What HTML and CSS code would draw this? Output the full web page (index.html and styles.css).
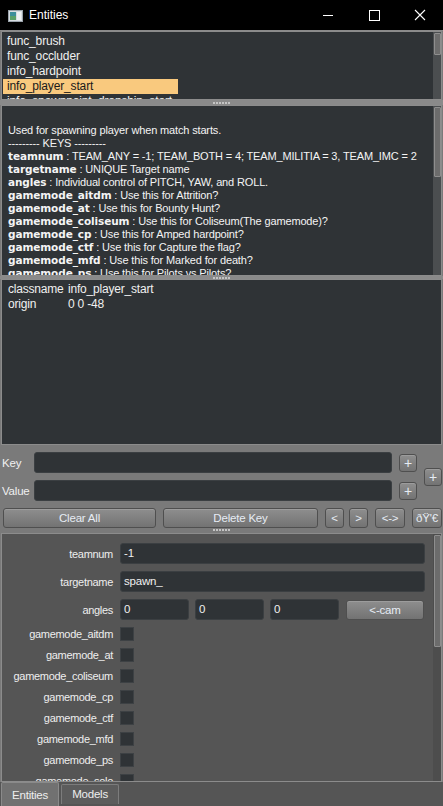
FILE: index.html
```html
<!DOCTYPE html>
<html lang="en">
<head>
    <meta charset="UTF-8">
    <meta name="viewport" content="width=device-width, initial-scale=1.0">
    <title>Entities</title>
    <link rel="stylesheet" href="styles.css">
</head>
<body>
    <!-- Window title bar -->
    <div class="titlebar">
        <svg class="app-icon" width="15" height="12" viewBox="0 0 15 12">
            <rect x="0.5" y="0.5" width="14" height="11" fill="#d8dde2" stroke="#9aa3ab"/>
            <rect x="2" y="2" width="6" height="8" fill="#3d8f9c"/>
            <rect x="2" y="6" width="6" height="4" fill="#5aa06a"/>
            <rect x="9" y="2" width="4" height="8" fill="#eef1f4"/>
        </svg>
        <span class="title-text">Entities</span>
        <div class="win-controls">
            <div class="win-btn"><span class="ico-min"></span></div>
            <div class="win-btn"><span class="ico-max"></span></div>
            <div class="win-btn">
                <svg width="12" height="12" viewBox="0 0 12 12">
                    <path d="M1 1 L11 11 M11 1 L1 11" stroke="#fff" stroke-width="1.1"/>
                </svg>
            </div>
        </div>
    </div>

    <!-- Entity class list -->
    <div class="panel list-panel">
        <div class="panel-body">
            <div class="list-item">func_brush</div>
            <div class="list-item">func_occluder</div>
            <div class="list-item">info_hardpoint</div>
            <div class="list-item list-item-selected">info_player_start</div>
            <div class="list-item">info_spawnpoint_dropship_start</div>
        </div>
        <div class="scrollbar"><div class="thumb thumb-list"></div></div>
    </div>

    <div class="splitter"><span class="grip"></span></div>

    <!-- Description -->
    <div class="panel desc-panel">
        <div class="panel-body desc">
            <div class="line">&nbsp;</div>
            <div class="line">Used for spawning player when match starts.</div>
            <div class="line">--------- KEYS ---------</div>
            <div class="line"><b>teamnum</b> : TEAM_ANY = -1; TEAM_BOTH = 4; TEAM_MILITIA = 3, TEAM_IMC = 2</div>
            <div class="line"><b>targetname</b> : UNIQUE Target name</div>
            <div class="line"><b>angles</b> : Individual control of PITCH, YAW, and ROLL.</div>
            <div class="line"><b>gamemode_aitdm</b> : Use this for Attrition?</div>
            <div class="line"><b>gamemode_at</b> : Use this for Bounty Hunt?</div>
            <div class="line"><b>gamemode_coliseum</b> : Use this for Coliseum(The gamemode)?</div>
            <div class="line"><b>gamemode_cp</b> : Use this for Amped hardpoint?</div>
            <div class="line"><b>gamemode_ctf</b> : Use this for Capture the flag?</div>
            <div class="line"><b>gamemode_mfd</b> : Use this for Marked for death?</div>
            <div class="line"><b>gamemode_ps</b> : Use this for Pilots vs Pilots?</div>
        </div>
        <div class="scrollbar"><div class="thumb thumb-desc"></div></div>
    </div>

    <div class="splitter splitter-thin"><span class="grip"></span></div>

    <!-- Raw key/values -->
    <div class="panel props-panel">
        <div class="panel-body props">
            <div class="prop-row"><span class="prop-key">classname</span><span>info_player_start</span></div>
            <div class="prop-row"><span class="prop-key">origin</span><span>0 0 -48</span></div>
        </div>
    </div>

    <!-- Key / value editor -->
    <div class="kv">
        <div class="kv-fields">
            <div class="kv-row">
                <span class="kv-label">Key</span>
                <div class="field kv-input"></div>
                <button class="btn btn-plus">+</button>
            </div>
            <div class="kv-row">
                <span class="kv-label">Value</span>
                <div class="field kv-input"></div>
                <button class="btn btn-plus">+</button>
            </div>
        </div>
        <button class="btn btn-plus">+</button>
    </div>

    <div class="actions">
        <button class="btn btn-clear">Clear All</button>
        <button class="btn btn-delete">Delete Key</button>
        <button class="btn btn-nav">&lt;</button>
        <button class="btn btn-nav btn-next">&gt;</button>
        <button class="btn btn-swap">&lt;-&gt;</button>
        <button class="btn btn-odd">ðŸ'€</button>
    </div>

    <div class="splitter splitter-low"><span class="grip"></span></div>

    <!-- Typed entity form -->
    <div class="panel form-panel">
        <div class="panel-body form">
            <div class="form-row">
                <span class="form-label">teamnum</span>
                <div class="field field-wide">-1</div>
            </div>
            <div class="form-row">
                <span class="form-label">targetname</span>
                <div class="field field-wide">spawn_</div>
            </div>
            <div class="form-row angles-row">
                <span class="form-label">angles</span>
                <div class="field field-angle">0</div>
                <div class="field field-angle">0</div>
                <div class="field field-angle">0</div>
                <button class="btn btn-cam">&lt;-cam</button>
            </div>
            <div class="check-row"><span class="form-label">gamemode_aitdm</span><span class="checkbox"></span></div>
            <div class="check-row"><span class="form-label">gamemode_at</span><span class="checkbox"></span></div>
            <div class="check-row"><span class="form-label">gamemode_coliseum</span><span class="checkbox"></span></div>
            <div class="check-row"><span class="form-label">gamemode_cp</span><span class="checkbox"></span></div>
            <div class="check-row"><span class="form-label">gamemode_ctf</span><span class="checkbox"></span></div>
            <div class="check-row"><span class="form-label">gamemode_mfd</span><span class="checkbox"></span></div>
            <div class="check-row"><span class="form-label">gamemode_ps</span><span class="checkbox"></span></div>
            <div class="check-row"><span class="form-label">gamemode_solo</span><span class="checkbox"></span></div>
        </div>
        <div class="scrollbar scrollbar-form"><div class="thumb thumb-form"></div></div>
    </div>

    <!-- Tabs -->
    <div class="tabs">
        <div class="tab tab-active">Entities</div>
        <div class="tab">Models</div>
    </div>
</body>
</html>
```

FILE: styles.css
```css
body{
    margin: 0;
    width: 443px;
    height: 806px;
    overflow: hidden;
    background-color: #7a7a7a;
    font-family: "Liberation Sans", Arial, sans-serif;
    font-size: 11.5px;
    letter-spacing: -0.2px;
    color: #f0f0f0;
    display: flex;
    flex-direction: column;
}

/* ---- title bar ---- */
.titlebar{
    height: 30px;
    flex: none;
    background-color: #000;
    display: flex;
    align-items: center;
    border-bottom: 1px solid #8a8a8a;
    letter-spacing: 0;
}

.app-icon{
    margin-left: 8px;
    margin-top: 1px;
}

.title-text{
    margin-left: 6px;
    font-size: 12px;
    color: #fff;
}

.win-controls{
    margin-left: auto;
    display: flex;
    height: 30px;
}

.win-btn{
    width: 46px;
    height: 30px;
    display: flex;
    align-items: center;
    justify-content: center;
}

.ico-min{
    width: 10px;
    height: 1px;
    background-color: #fff;
}

.ico-max{
    width: 9px;
    height: 9px;
    border: 1px solid #fff;
}

/* ---- panels ---- */
.panel{
    flex: none;
    display: flex;
    margin: 0 1px;
    border: 1px solid #8c8c8c;
    background-color: #2f3336;
    overflow: hidden;
}

.panel-body{
    flex: 1;
    overflow: hidden;
}

.scrollbar{
    width: 8px;
    flex: none;
    background-color: #4b4e50;
    padding-top: 1px;
}

.thumb{
    margin: 0 0 0 1px;
    width: 5px;
    background-color: #6c6c6c;
    border: 1px solid #8e8e8e;
    border-radius: 1px;
}

.list-panel{ height: 67px; }
.thumb-list{ height: 20px; }

.list-panel .panel-body{ padding-top: 2px; }

.list-item{
    width: 171px;
    height: 15px;
    line-height: 15px;
    padding-left: 4px;
    margin-left: 1px;
    white-space: nowrap;
    font-size: 12px;
    letter-spacing: -0.15px;
}

.list-item-selected{
    background-color: #f9c97e;
    color: #1a1a1a;
}

.splitter{
    height: 5px;
    flex: none;
    display: flex;
    align-items: center;
    justify-content: center;
    background-color: #8a8a8a;
}

.splitter-thin{ height: 3px; }
.splitter-low{ height: 4px; background-color: #7a7a7a; }

.grip{
    width: 18px;
    height: 2px;
    background: repeating-linear-gradient(90deg, #c4c4c4 0 2px, transparent 2px 3px);
}

.desc-panel{ height: 169px; }
.thumb-desc{ height: 68px; }

.desc{
    padding: 5px 0 0 6px;
    font-size: 11px;
    letter-spacing: -0.15px;
    color: #f4f4f4;
}

.desc .line{
    height: 13px;
    line-height: 13px;
    white-space: nowrap;
}

.desc b{
    font-family: "DejaVu Sans", Verdana, sans-serif;
    font-size: 10.5px;
    letter-spacing: -0.1px;
    font-weight: bold;
}

.props-panel{ height: 164px; }

.props{
    padding: 2px 0 0 6px;
    font-size: 12px;
}

.prop-row{
    height: 15px;
    line-height: 15px;
    display: flex;
}

.prop-key{
    width: 60px;
}

/* ---- key / value editor ---- */
.kv{
    flex: none;
    display: flex;
    align-items: center;
    padding: 7px 0 0 2px;
}

.kv-fields{
    display: flex;
    flex-direction: column;
    gap: 7px;
}

.kv-row{
    display: flex;
    align-items: center;
    height: 21px;
}

.kv-label{
    width: 32px;
}

.field{
    height: 21px;
    box-sizing: border-box;
    background-color: #2f3336;
    border: 1px solid #3b3f42;
    border-radius: 3px;
    padding-left: 3px;
    line-height: 19px;
    color: #f0f0f0;
}

.kv-input{ width: 358px; }

.btn{
    box-sizing: border-box;
    height: 20px;
    padding: 0;
    font-family: "Liberation Sans", Arial, sans-serif;
    font-size: 11.5px;
    letter-spacing: -0.2px;
    color: #e6ecf4;
    background: linear-gradient(#8e8e8e, #737373);
    border: 1px solid #4f4f4f;
    border-radius: 3px;
    box-shadow: inset 0 1px 0 #9c9c9c;
}

.btn-plus{
    width: 18px;
    height: 18px;
    margin-left: 7px;
    font-size: 14px;
    line-height: 14px;
}

.actions{
    flex: none;
    display: flex;
    padding: 7px 1px 0 3px;
}

.btn-clear{ width: 153px; }
.btn-delete{ width: 155px; margin-left: 7px; }
.btn-nav{ width: 19px; margin-left: 7px; }
.btn-next{ margin-left: 5px; }
.btn-swap{ width: 30px; margin-left: 7px; }
.btn-odd{ width: 30px; margin-left: 7px; }

/* ---- typed form ---- */
.form-panel{
    height: 247px;
    background-color: #555;
    margin-top: 1px;
}

.scrollbar-form{
    background-color: #4d4d4d;
}

.thumb-form{ height: 110px; }

.form{
    padding-top: 9px;
    display: flex;
    flex-direction: column;
    gap: 7px;
}

.form-row, .check-row{
    display: flex;
    align-items: center;
    gap: 7px;
}

.form-row{ height: 21px; }
.check-row{ height: 14px; }

.form-label{
    width: 111px;
    text-align: right;
    font-size: 11px;
    letter-spacing: -0.3px;
    color: #eeeeee;
    white-space: nowrap;
}

.field-wide{ width: 305px; }

.angles-row{ gap: 6px; }
.angles-row .form-label{ margin-right: 1px; }
.field-angle{ width: 69px; }

.btn-cam{
    width: 78px;
    height: 20px;
    margin-left: 1px;
}

.checkbox{
    width: 14px;
    height: 14px;
    box-sizing: border-box;
    background-color: #2f3336;
    border: 1px solid #3d4144;
}

/* ---- tabs ---- */
.tabs{
    flex: 1;
    display: flex;
    align-items: flex-start;
    background-color: #555;
    padding-left: 1px;
}

.tab{
    height: 19px;
    line-height: 19px;
    padding: 0 10px;
    margin-top: 2px;
    margin-left: 2px;
    background-color: #5c5c5c;
    border: 1px solid #7c7c7c;
    border-bottom: 0;
    border-radius: 2px 2px 0 0;
    color: #eeeeee;
}

.tab-active{
    margin-left: 0;
    margin-top: 0;
    height: 24px;
    line-height: 25px;
    background-color: #717171;
    border-color: #8a8a8a;
}
```
